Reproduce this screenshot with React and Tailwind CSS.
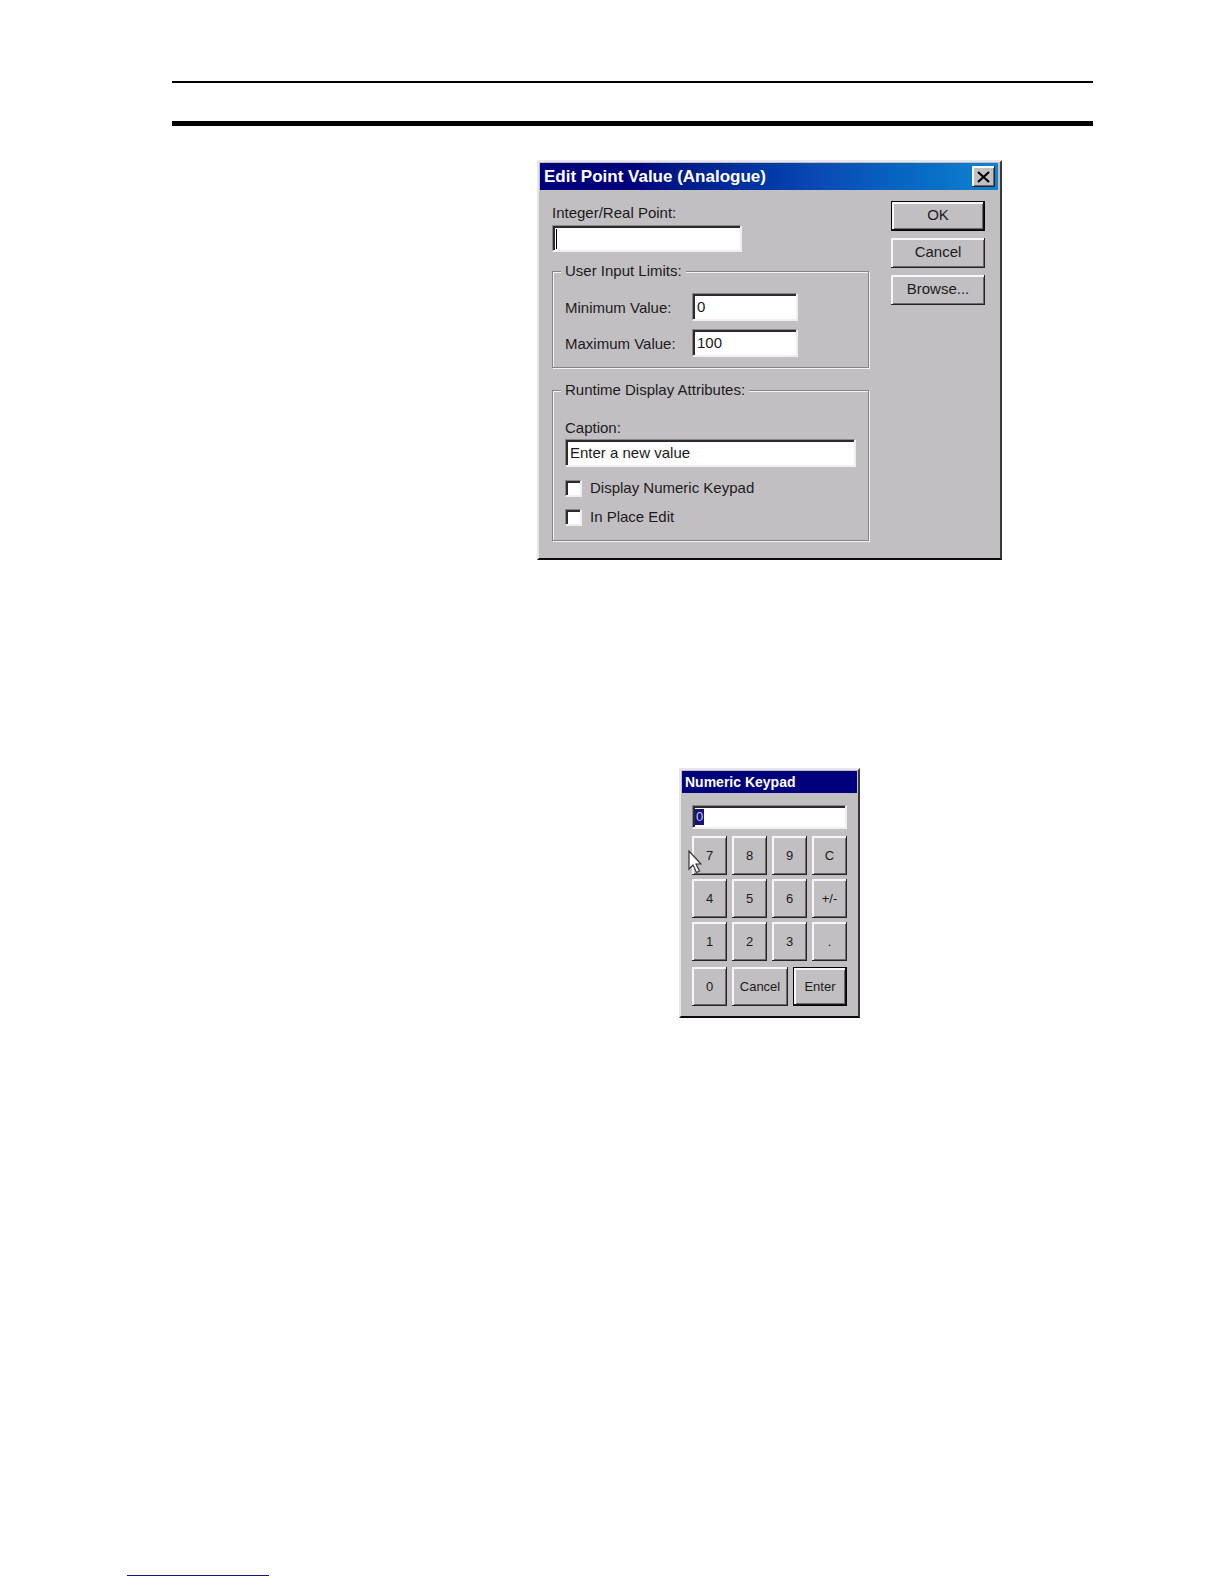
import React from 'react';

const raised =
  'bg-[#c2bfc2] text-[#1c1a1c] shadow-[inset_-1px_-1px_#242224,inset_2px_2px_#f8f6f8,inset_-2px_-2px_#6c696c]';
const raisedDefault =
  'bg-[#c2bfc2] text-[#1c1a1c] border border-black shadow-[inset_-1px_-1px_#141214,inset_2px_2px_#f8f6f8,inset_-2px_-2px_#6c696c]';
const sunken =
  'bg-white border-t border-l border-r-2 border-b-2 border-t-[#8a888a] border-l-[#8a888a] border-r-[#f0eef0] border-b-[#f0eef0] shadow-[inset_2px_2px_#2c2a2c] rounded-none outline-none';
const dialogFrame =
  'bg-[#c2bfc2] border-l-2 border-t-2 border-r-2 border-b-2 border-l-[#e8e6e8] border-t-[#e8e6e8] border-r-[#3a383a] border-b-[#0c0a0c] p-px';
const group =
  'border border-[#858385] shadow-[1px_1px_#f4f2f4,inset_1px_1px_#f4f2f4] px-3 min-w-0';

const keys = ['7', '8', '9', 'C', '4', '5', '6', '+/-', '1', '2', '3', '.'];

const DialogButton = ({ children, isDefault }) => (
  <button type="button" className={`h-[30px] w-full pb-[2px] leading-5 ${isDefault ? raisedDefault : raised}`}>
    {children}
  </button>
);

const CheckRow = ({ id, label }) => (
  <div className="flex items-center gap-2 h-5">
    <input id={id} type="checkbox" className={`appearance-none size-[17px] shrink-0 ${sunken}`} />
    <label htmlFor={id}>{label}</label>
  </div>
);

const EditPointDialog = () => (
  <section className={`w-[465px] h-[400px] font-['Liberation_Sans',Arial,sans-serif] text-[15px] leading-5 text-[#1c1a1c] ${dialogFrame}`}>
    <header className="flex items-center justify-between h-[27px] pl-1 pr-[3px] mr-px bg-linear-to-r from-[#00007c] from-20% via-[#0a48b4] via-60% to-[#1084d0]">
      <h1 className="text-[17px] font-bold text-white">Edit Point Value (Analogue)</h1>
      <button type="button" aria-label="Close" className={`w-[23px] h-[21px] flex items-center justify-center ${raised}`}>
        <svg width="13" height="12" viewBox="0 0 13 12" fill="none" stroke="#000" strokeWidth="2.2">
          <path d="M1 1l11 10M12 1L1 11" />
        </svg>
      </button>
    </header>

    <div className="flex gap-[22px] pl-3 pr-[14px] pt-[11px]">
      <div className="flex-1 min-w-0">
        <label htmlFor="point" className="block leading-6">Integer/Real Point:</label>
        <div className="relative w-[190px]">
          <input id="point" type="text" className={`block w-full h-[27px] px-1 ${sunken}`} />
          {/* text caret */}
          <span className="absolute left-1 top-1 w-px h-5 bg-black" />
        </div>

        <fieldset className={`mt-[9px] pt-3 pb-[10px] ${group}`}>
          <legend className="bg-[#c2bfc2] -ml-1 px-1">User Input Limits:</legend>
          <div className="grid grid-cols-[127px_106px] gap-y-2 items-center">
            <label htmlFor="min" className="pt-[2px]">Minimum Value:</label>
            <input id="min" type="text" defaultValue="0" className={`w-full h-7 px-1 ${sunken}`} />
            <label htmlFor="max" className="pt-[2px]">Maximum Value:</label>
            <input id="max" type="text" defaultValue="100" className={`w-full h-7 px-1 ${sunken}`} />
          </div>
        </fieldset>

        <fieldset className={`mt-3 pt-[18px] pb-[13px] ${group}`}>
          <legend className="bg-[#c2bfc2] -ml-1 px-1">Runtime Display Attributes:</legend>
          <label htmlFor="caption" className="block">Caption:</label>
          <input id="caption" type="text" defaultValue="Enter a new value" className={`block mt-px mb-[11px] w-full h-7 px-1 ${sunken}`} />
          <div className="flex flex-col gap-[9px]">
            <CheckRow id="keypad" label="Display Numeric Keypad" />
            <CheckRow id="inplace" label="In Place Edit" />
          </div>
        </fieldset>
      </div>

      <div className="w-[94px] flex flex-col gap-[7px]">
        <DialogButton isDefault>OK</DialogButton>
        <DialogButton>Cancel</DialogButton>
        <DialogButton>Browse...</DialogButton>
      </div>
    </div>
  </section>
);

const NumericKeypad = () => (
  <section className={`w-[181px] h-[250px] font-['Liberation_Sans',Arial,sans-serif] text-[13px] leading-4 ${dialogFrame}`}>
    <header className="h-[22px] pl-[3px] flex items-center bg-[#00007c]">
      <h2 className="text-[14px] font-bold text-white">Numeric Keypad</h2>
    </header>
    <div className="px-[10px] pt-3">
      <input
        type="text"
        aria-label="Value"
        defaultValue="0"
        className={`block w-[155px] h-6 px-[3px] text-[#c8c8f0] bg-linear-to-r from-[#14147c] to-[#14147c] bg-size-[9px_16px] bg-no-repeat bg-position-[2px_3px] ${sunken}`}
      />
      <div className="relative mt-[7px] w-[155px]">
        <div className="grid grid-cols-[35px_35px_35px_35px] justify-between gap-y-1">
          {keys.map((key) => (
            <button key={key} type="button" className={`h-[39px] ${raised}`}>{key}</button>
          ))}
        </div>
        <div className="mt-[6px] flex justify-between">
          <button type="button" className={`w-[35px] h-[39px] ${raised}`}>0</button>
          <button type="button" className={`w-14 h-[39px] ${raised}`}>Cancel</button>
          <button type="button" className={`w-[54px] h-[39px] ${raisedDefault}`}>Enter</button>
        </div>
        {/* mouse pointer */}
        <svg className="absolute -left-1 top-[14px]" width="14" height="24" viewBox="0 0 14 24">
          <path d="M1 1v18l4-4 3.500 7.500 3-1.500-3.500-7h5z" fill="#fff" stroke="#333" strokeWidth="1.200" />
        </svg>
      </div>
    </div>
  </section>
);

const App = () => {
  return (
    <div className="min-h-screen bg-white flex flex-col pt-[81px] pb-2">
      <div className="ml-[172px] mr-[131px] h-[45px] border-t-2 border-b-[5px] border-black" />
      <main className="ml-[446px] mr-[131px] mt-[34px] flex flex-col items-center gap-52">
        <EditPointDialog />
        <NumericKeypad />
      </main>
      <footer className="mt-auto pl-[127px]">
        <a href="#top" aria-label="Back to top" className="block w-[142px] h-4 border-b border-[#14147c]" />
      </footer>
    </div>
  );
};

export default App;
